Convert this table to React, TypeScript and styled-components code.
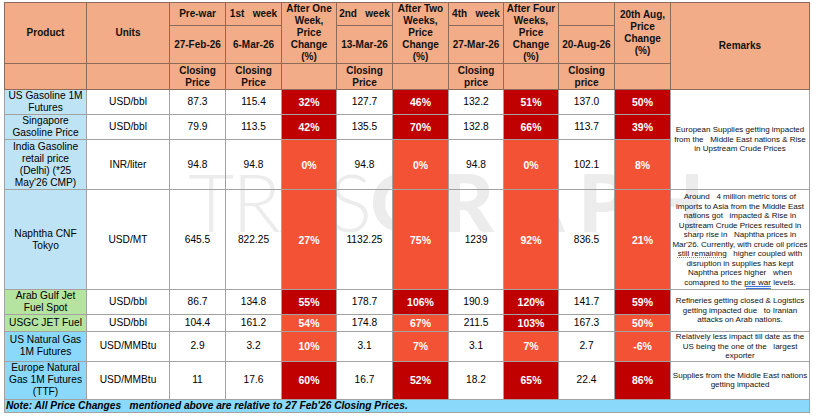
import React from "react";
import styled, { createGlobalStyle } from "styled-components";

type Tint = "sky" | "green" | "blue";
type Tone = "dark" | "light";

const tintColor = (tint: Tint) => {
  switch (tint) {
    case "green":
      return "#b4e4a0";
    case "blue":
      return "#8ad8fa";
    default:
      return "#bee3f4";
  }
};

const GlobalStyle = createGlobalStyle`
  html, body {
    margin: 0;
    padding: 0;
    background: #fff;
  }
  body {
    font-family: "Liberation Sans", Arial, sans-serif;
    color: #000;
  }
`;

const Page = styled.div`
  position: relative;
  width: 805px;
  padding: 2px 4px;
`;

const Watermark = styled.div`
  position: absolute;
  left: 188px;
  top: 161px;
  z-index: 0;
  font-family: Lato, "Open Sans", sans-serif;
  font-size: 80px;
  line-height: 1;
  color: #ececec;
  white-space: nowrap;
  pointer-events: none;

  & .thin {
    font-weight: 300;
    letter-spacing: -2px;
  }
  & .bold {
    font-weight: 900;
    letter-spacing: 14px;
  }
`;

const Table = styled.table`
  position: relative;
  z-index: 1;
  width: 805px;
  table-layout: fixed;
  border-collapse: collapse;
  font-size: 10.2px;
`;

const HeadRow = styled.tr<{ $h: number }>`
  height: ${({ $h }) => $h}px;
`;

const HeadCell = styled.th`
  background: #f2ac87;
  border: 1px solid #8e6a58;
  padding: 0 1px;
  font-weight: 700;
  font-size: 10px;
  line-height: 12px;
  text-align: center;
  vertical-align: middle;
  white-space: pre;
  color: #111;
`;

const BodyRow = styled.tr<{ $h: number }>`
  height: ${({ $h }) => $h}px;
`;

const Cell = styled.td`
  border: 1px solid #a2a2a2;
  padding: 0 1px;
  text-align: center;
  vertical-align: middle;
  line-height: 12px;
  white-space: nowrap;
  background: transparent;
`;

const ProductCell = styled(Cell)<{ $tint: Tint }>`
  background: ${({ $tint }) => tintColor($tint)};
`;

const ChangeCell = styled(Cell)<{ $tone: Tone }>`
  background: ${({ $tone }) => ($tone === "dark" ? "#c00000" : "#f35234")};
  color: #fff;
  font-size: 10.5px;
  font-weight: 700;
`;

const RemarkCell = styled(Cell)`
  font-size: 8px;
  line-height: 9.5px;
  white-space: pre;
  color: #111;
`;

const NoteCell = styled.td`
  background: #8ad8fa;
  border: 1px solid #a2a2a2;
  padding: 0 1px;
  font-size: 10.2px;
  line-height: 12px;
  font-weight: 700;
  font-style: italic;
  white-space: pre;
  text-align: left;
`;

const Squiggle = styled.span`
  text-decoration: underline dotted #c98a1a;
  text-underline-offset: 1px;
`;

const Flagged = styled.span`
  text-decoration: underline double #3f73d8;
  text-underline-offset: 1px;
`;

const colWidths = [82, 83, 56, 56, 55, 56, 56, 55, 55, 56, 56, 139];

type Change = [string, Tone];

interface Row {
  product: string[];
  tint: Tint;
  unit: string;
  height: number;
  prices: [string, string, string, string, string];
  changes: [Change, Change, Change, Change];
  remark?: { lines: React.ReactNode; span: number };
}

const rows: Row[] = [
  {
    product: ["US Gasoline 1M", "Futures"],
    tint: "sky",
    unit: "USD/bbl",
    height: 25,
    prices: ["87.3", "115.4", "127.7", "132.2", "137.0"],
    changes: [["32%", "dark"], ["46%", "dark"], ["51%", "dark"], ["50%", "dark"]],
    remark: {
      span: 3,
      lines:
        "European Supplies getting impacted\nfrom the   Middle East nations & Rise\nin Upstream Crude Prices",
    },
  },
  {
    product: ["Singapore", "Gasoline Price"],
    tint: "sky",
    unit: "USD/bbl",
    height: 25,
    prices: ["79.9", "113.5", "135.5", "132.8", "113.7"],
    changes: [["42%", "dark"], ["70%", "dark"], ["66%", "dark"], ["39%", "dark"]],
  },
  {
    product: ["India Gasoline", "retail price", "(Delhi) (*25", "May'26 CMP)"],
    tint: "sky",
    unit: "INR/liter",
    height: 50,
    prices: ["94.8", "94.8", "94.8", "94.8", "102.1"],
    changes: [["0%", "light"], ["0%", "light"], ["0%", "light"], ["8%", "light"]],
  },
  {
    product: ["Naphtha CNF", "Tokyo"],
    tint: "sky",
    unit: "USD/MT",
    height: 100,
    prices: ["645.5", "822.25", "1132.25", "1239", "836.5"],
    changes: [["27%", "light"], ["75%", "light"], ["92%", "light"], ["21%", "light"]],
    remark: {
      span: 1,
      lines: (
        <>
          {"Around   4 million metric tons of\nimports to Asia from the Middle East\nnations got   impacted & Rise in\nUpstream Crude Prices resulted in\nsharp rise in   Naphtha prices in\nMar'26. Currently, with crude oil prices\n"}
          <Squiggle>still remaining</Squiggle>
          {"   higher coupled with\ndisruption in supplies has kept\nNaphtha prices higher   when\ncomapred to the "}
          <Flagged>pre war</Flagged>
          {" levels."}
        </>
      ),
    },
  },
  {
    product: ["Arab Gulf Jet", "Fuel Spot"],
    tint: "green",
    unit: "USD/bbl",
    height: 25,
    prices: ["86.7", "134.8", "178.7", "190.9", "141.7"],
    changes: [["55%", "dark"], ["106%", "dark"], ["120%", "dark"], ["59%", "dark"]],
    remark: {
      span: 2,
      lines:
        "Refineries getting closed & Logistics\ngetting impacted due   to Iranian\nattacks on Arab nations.",
    },
  },
  {
    product: ["USGC JET Fuel"],
    tint: "green",
    unit: "USD/bbl",
    height: 17,
    prices: ["104.4", "161.2", "174.8", "211.5", "167.3"],
    changes: [["54%", "light"], ["67%", "light"], ["103%", "dark"], ["50%", "light"]],
  },
  {
    product: ["US Natural Gas", "1M Futures"],
    tint: "blue",
    unit: "USD/MMBtu",
    height: 29,
    prices: ["2.9", "3.2", "3.1", "3.1", "2.7"],
    changes: [["10%", "light"], ["7%", "light"], ["7%", "light"], ["-6%", "light"]],
    remark: {
      span: 1,
      lines:
        "Relatively less impact till date as the\nUS being the one of the   largest\nexporter",
    },
  },
  {
    product: ["Europe Natural", "Gas 1M Futures", "(TTF)"],
    tint: "blue",
    unit: "USD/MMBtu",
    height: 38,
    prices: ["11", "17.6", "16.7", "18.2", "22.4"],
    changes: [["60%", "dark"], ["52%", "dark"], ["65%", "dark"], ["86%", "dark"]],
    remark: {
      span: 1,
      lines: "Supplies from the Middle East nations\ngetting impacted",
    },
  },
];

const Lines: React.FC<{ lines: string[] }> = ({ lines }) => (
  <>
    {lines.map((line, i) => (
      <React.Fragment key={i}>
        {i > 0 && <br />}
        {line}
      </React.Fragment>
    ))}
  </>
);

const App: React.FC = () => {
  return (
    <Page>
      <GlobalStyle />
      <Watermark>
        <span className="thin">TRAS</span>
        <span className="bold">GRAPH</span>
      </Watermark>
      <Table>
        <colgroup>
          {colWidths.map((w, i) => (
            <col key={i} style={{ width: w }} />
          ))}
        </colgroup>
        <thead>
          <HeadRow $h={23}>
            <HeadCell rowSpan={2}>Product</HeadCell>
            <HeadCell rowSpan={2}>Units</HeadCell>
            <HeadCell>Pre-war</HeadCell>
            <HeadCell>{"1st   week"}</HeadCell>
            <HeadCell rowSpan={2}>{"After One\nWeek,\nPrice\nChange\n(%)"}</HeadCell>
            <HeadCell>{"2nd   week"}</HeadCell>
            <HeadCell rowSpan={2}>{"After Two\nWeeks,\nPrice\nChange\n(%)"}</HeadCell>
            <HeadCell>{"4th   week"}</HeadCell>
            <HeadCell rowSpan={2}>{"After Four\nWeeks,\nPrice\nChange\n(%)"}</HeadCell>
            <HeadCell />
            <HeadCell rowSpan={2}>{"20th Aug,\nPrice\nChange\n(%)"}</HeadCell>
            <HeadCell rowSpan={3}>Remarks</HeadCell>
          </HeadRow>
          <HeadRow $h={37}>
            <HeadCell>27-Feb-26</HeadCell>
            <HeadCell>6-Mar-26</HeadCell>
            <HeadCell>13-Mar-26</HeadCell>
            <HeadCell>27-Mar-26</HeadCell>
            <HeadCell>20-Aug-26</HeadCell>
          </HeadRow>
          <HeadRow $h={26}>
            <HeadCell />
            <HeadCell />
            <HeadCell>{"Closing\nPrice"}</HeadCell>
            <HeadCell>{"Closing\nPrice"}</HeadCell>
            <HeadCell />
            <HeadCell>{"Closing\nPrice"}</HeadCell>
            <HeadCell />
            <HeadCell>{"Closing\nprice"}</HeadCell>
            <HeadCell />
            <HeadCell>{"Closing\nprice"}</HeadCell>
            <HeadCell />
          </HeadRow>
        </thead>
        <tbody>
          {rows.map((row, i) => (
            <BodyRow key={i} $h={row.height}>
              <ProductCell $tint={row.tint}>
                <Lines lines={row.product} />
              </ProductCell>
              <Cell>{row.unit}</Cell>
              <Cell>{row.prices[0]}</Cell>
              <Cell>{row.prices[1]}</Cell>
              <ChangeCell $tone={row.changes[0][1]}>{row.changes[0][0]}</ChangeCell>
              <Cell>{row.prices[2]}</Cell>
              <ChangeCell $tone={row.changes[1][1]}>{row.changes[1][0]}</ChangeCell>
              <Cell>{row.prices[3]}</Cell>
              <ChangeCell $tone={row.changes[2][1]}>{row.changes[2][0]}</ChangeCell>
              <Cell>{row.prices[4]}</Cell>
              <ChangeCell $tone={row.changes[3][1]}>{row.changes[3][0]}</ChangeCell>
              {row.remark && (
                <RemarkCell rowSpan={row.remark.span}>{row.remark.lines}</RemarkCell>
              )}
            </BodyRow>
          ))}
          <BodyRow $h={13}>
            <NoteCell colSpan={12}>
              {"Note: All Price Changes   mentioned above are relative to 27 Feb'26 Closing Prices."}
            </NoteCell>
          </BodyRow>
        </tbody>
      </Table>
    </Page>
  );
};

export default App;
